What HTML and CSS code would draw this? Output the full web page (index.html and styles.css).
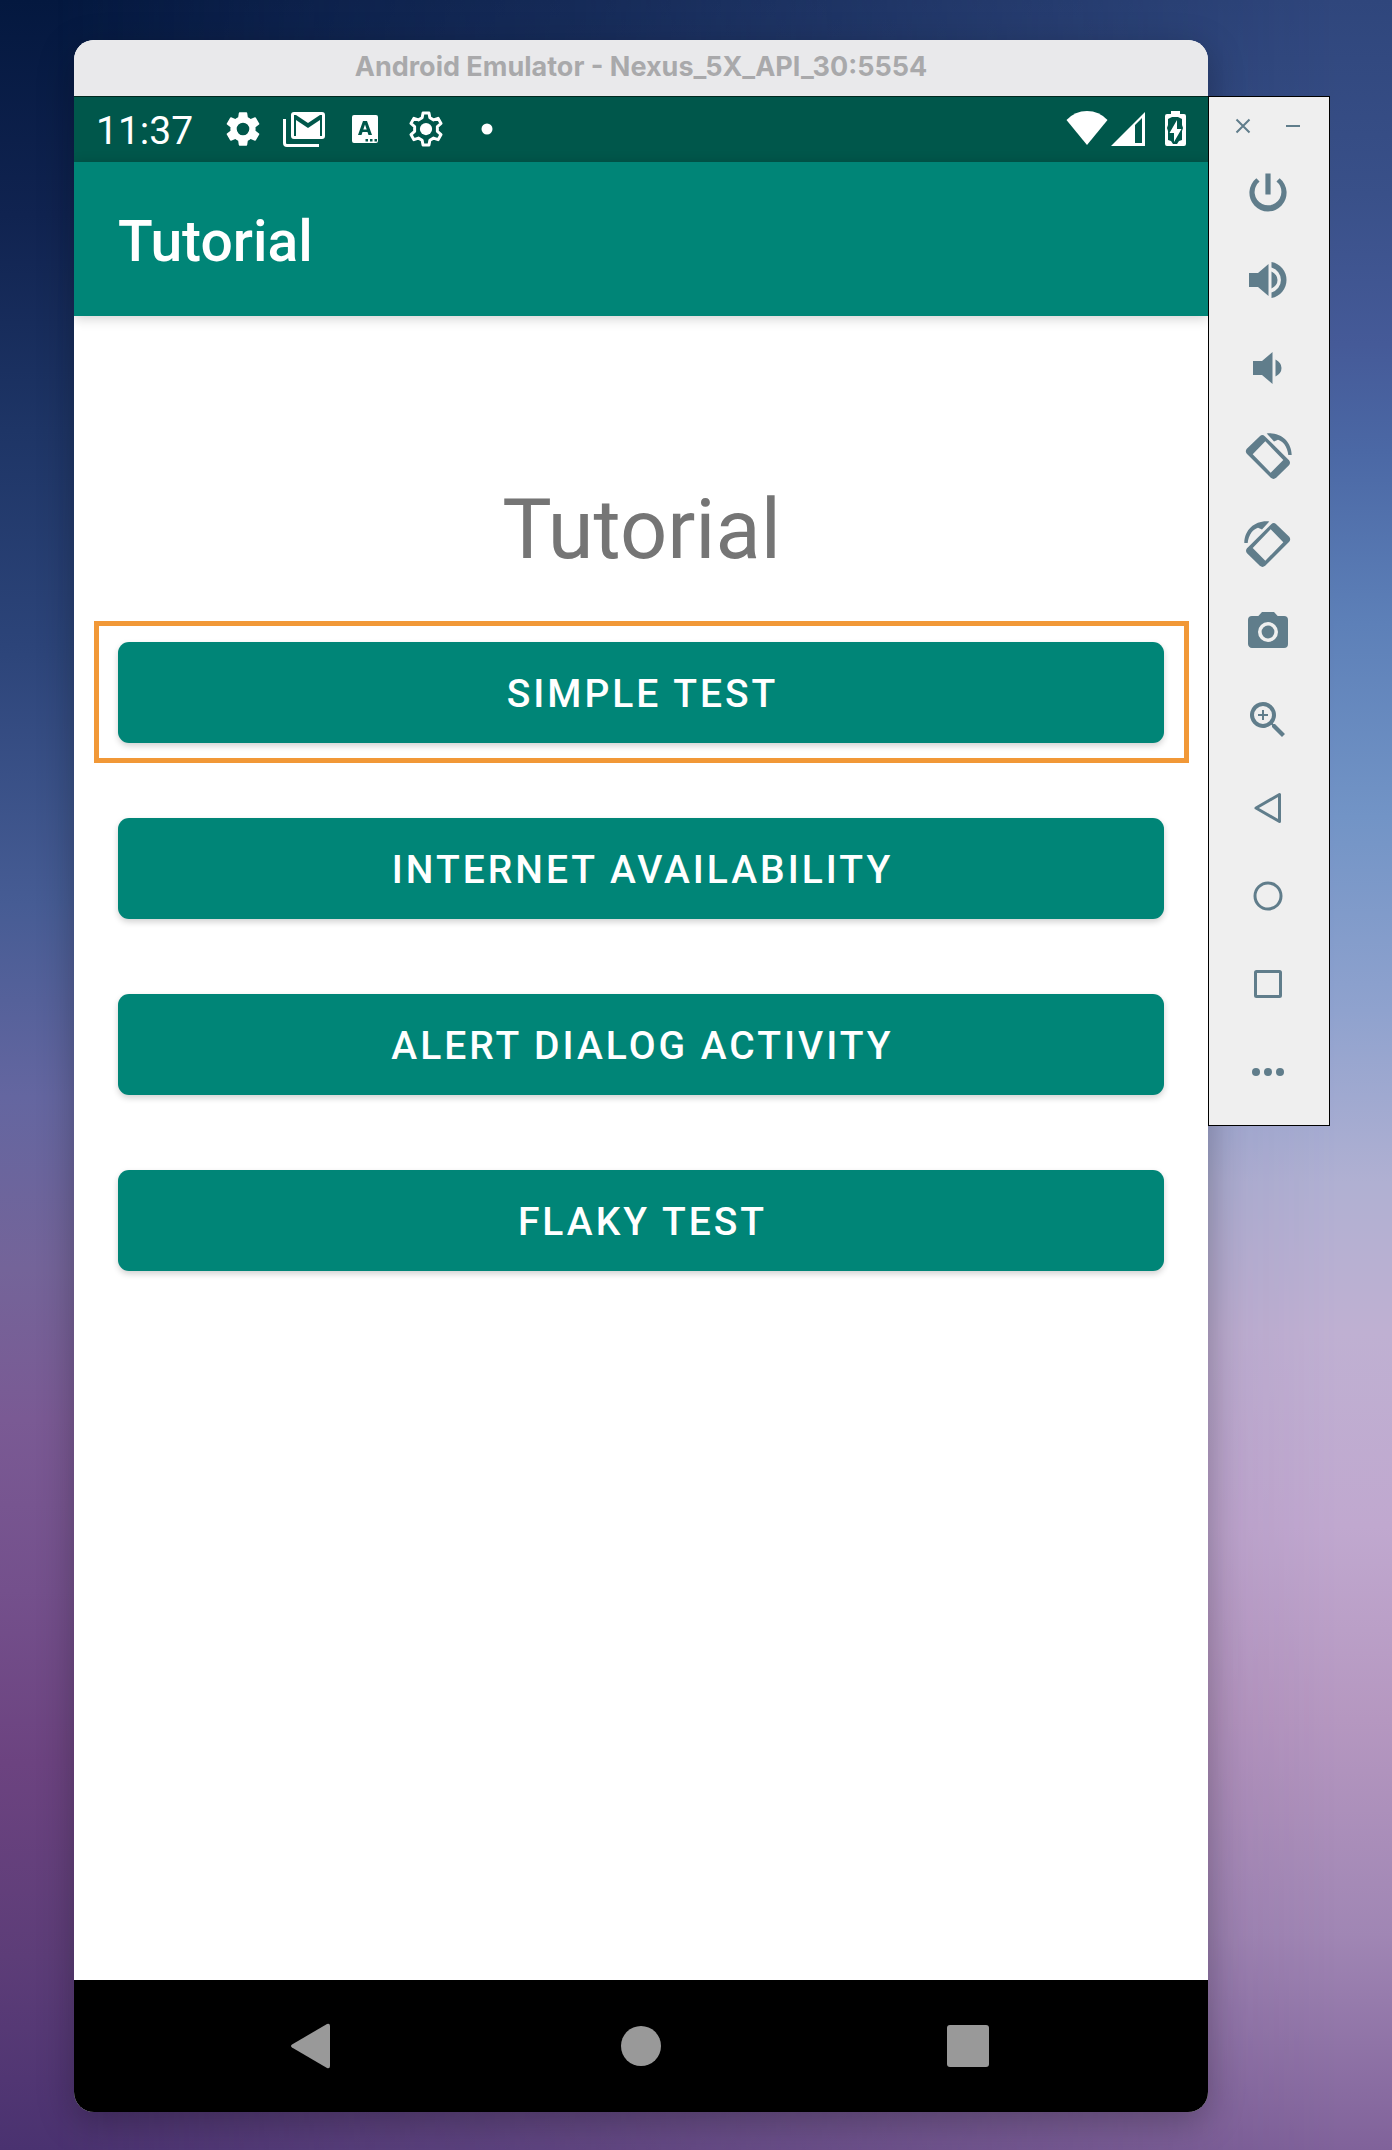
FILE: index.html
```html
<!DOCTYPE html>
<html lang="en">
<head>
<meta charset="utf-8">
<meta name="viewport" content="width=device-width, initial-scale=1">
<title>Android Emulator - Nexus_5X_API_30:5554</title>
<link rel="stylesheet" href="styles.css">
</head>
<body>
<div class="desktop">
  <div class="window">
    <header class="title-bar">Android Emulator - Nexus_5X_API_30:5554</header>
    <div class="status-bar">
      <span class="clock">11:37</span>
      <div class="notifications">
        <svg class="icon-status" viewBox="0 0 44 44" aria-hidden="true"><g transform="translate(1 0) scale(1.75)"><path d="M19.14 12.94c.04-.3.06-.61.06-.94 0-.32-.02-.64-.07-.94l2.03-1.58a.49.49 0 0 0 .12-.61l-1.92-3.32a.49.49 0 0 0-.59-.22l-2.39.96c-.5-.38-1.03-.7-1.62-.94l-.36-2.54a.48.48 0 0 0-.48-.41h-3.84c-.24 0-.43.17-.47.41l-.36 2.54c-.59.24-1.13.57-1.62.94l-2.39-.96a.48.48 0 0 0-.59.22L2.74 8.87c-.12.21-.08.47.12.61l2.03 1.58c-.05.3-.09.63-.09.94s.02.64.07.94l-2.03 1.58a.49.49 0 0 0-.12.61l1.92 3.32c.12.22.37.29.59.22l2.39-.96c.5.38 1.03.7 1.62.94l.36 2.54c.05.24.24.41.48.41h3.84c.24 0 .44-.17.47-.41l.36-2.54c.59-.24 1.13-.56 1.62-.94l2.39.96c.22.08.47 0 .59-.22l1.92-3.32a.49.49 0 0 0-.12-.61zM12 15.6a3.6 3.6 0 1 1 0-7.2 3.6 3.6 0 0 1 0 7.2z"/></g></svg>
        <svg class="icon-status" viewBox="0 0 44 44" aria-hidden="true"><path d="M2.500 11v24a2.500 2.500 0 0 0 2.500 2.500h32" fill="none" stroke="currentColor" stroke-width="3"/><path fill-rule="evenodd" d="M12 4h28a3 3 0 0 1 3 3v21a3 3 0 0 1-3 3H12a3 3 0 0 1-3-3V7a3 3 0 0 1 3-3zM12 28h2V12l12 8 12-8v16h2V7h-2L26 15 14 7h-2z"/></svg>
        <svg class="icon-status" viewBox="0 0 44 44" aria-hidden="true"><path fill-rule="evenodd" d="M11 7h22a2 2 0 0 1 2 2v24a2 2 0 0 1-2 2H11a2 2 0 0 1-2-2V9a2 2 0 0 1 2-2zM20 13l-5 14h3.500l1-3h5l1 3H29l-5-14zM22 16.500l1.700 5h-3.400zM22.500 31v2.500h2.500V31zM27 31v2.500h2.500V31zM31.500 31v2.500H34V31z"/></svg>
        <svg class="icon-status" viewBox="0 0 44 44" aria-hidden="true"><g transform="translate(1 0) scale(1.75)"><path fill="none" stroke="currentColor" stroke-width="1.700" stroke-linejoin="round" d="M10.300 2.900h3.400l.5 2.700 2.100 1.200 2.600-.9 1.700 2.900-2.100 1.800v2.800l2.100 1.800-1.700 2.900-2.600-.9-2.100 1.200-.5 2.700h-3.400l-.5-2.700-2.100-1.200-2.600.9-1.700-2.900 2.100-1.800v-2.800L3.400 8.800l1.700-2.900 2.600.9 2.100-1.200z"/><circle cx="12" cy="12" r="3.500"/></g></svg>
        <svg class="icon-status" viewBox="0 0 44 44" aria-hidden="true"><circle cx="22" cy="21" r="5.500"/></svg>
      </div>
      <div class="system">
        <svg class="icon-status" viewBox="0 0 44 44" aria-hidden="true"><path d="M22 37 1.500 12Q10 3 22 3t20.500 9z"/></svg>
        <svg class="icon-status" viewBox="0 0 44 44" aria-hidden="true"><path fill-rule="evenodd" d="M2 38 36 4v34zM26 17v18h7V10z"/></svg>
        <svg class="icon-status" viewBox="0 0 44 44" aria-hidden="true"><path fill-rule="evenodd" d="M18 3h9v3h4a2 2 0 0 1 2 2v28a2 2 0 0 1-2 2H14a2 2 0 0 1-2-2V8a2 2 0 0 1 2-2h4zM19 9l-4 2v6l-1 3 1 3v9l3 1 2 3h4l2-3 3-1v-9l1-3-1-3v-6l-4-2zM24 12v9h4.500L21 34v-9h-4.500z"/></svg>
      </div>
    </div>
    <div class="app-bar">Tutorial</div>
    <main class="screen">
      <h1 class="heading">Tutorial</h1>
      <div class="actions">
        <div class="highlight"><button class="action" type="button">SIMPLE TEST</button></div>
        <button class="action" type="button">INTERNET AVAILABILITY</button>
        <button class="action" type="button">ALERT DIALOG ACTIVITY</button>
        <button class="action" type="button">FLAKY TEST</button>
      </div>
    </main>
    <nav class="nav-bar">
      <button class="nav-key" type="button" aria-label="Back"><svg viewBox="0 0 48 48"><path d="M2 22.500 37 2q3-1 3 2v40q0 3-3 2L2 25.500q-2-1.500 0-3z"/></svg></button>
      <button class="nav-key" type="button" aria-label="Home"><svg viewBox="0 0 48 48"><circle cx="24" cy="24" r="20"/></svg></button>
      <button class="nav-key" type="button" aria-label="Overview"><svg viewBox="0 0 48 48"><rect x="3" y="3" width="42" height="42" rx="3"/></svg></button>
    </nav>
  </div>
  <aside class="toolbar">
    <div class="window-keys">
      <button class="window-key" type="button" aria-label="Close"><svg viewBox="0 0 24 24"><path class="line" d="m5.500 5.500 13 13m0-13-13 13"/></svg></button>
      <button class="window-key" type="button" aria-label="Minimize"><svg viewBox="0 0 24 24"><path class="line" d="M5 12h14"/></svg></button>
    </div>
    <button class="tool" type="button" aria-label="Power"><svg viewBox="0 0 24 24"><path d="M13.300 2.700h-2.600v10.600h2.600zm4.530 2.470-1.600 1.600A6.700 6.700 0 0 1 18.700 12a6.700 6.700 0 1 1-10.930-5.230l-1.600-1.600A9.300 9.300 0 1 0 17.830 5.170z"/></svg></button>
    <button class="tool" type="button" aria-label="Volume up"><svg viewBox="0 0 48 48"><path d="M5 17v14h9l10.500 9V8L14 17zM27.500 15.500v17q6-3 6-8.500t-6-8.500zM27.500 6v5.500a13 13 0 0 1 0 25V42a18.300 18.300 0 0 0 0-36z"/></svg></button>
    <button class="tool" type="button" aria-label="Volume down"><svg viewBox="0 0 48 48"><path d="M9 17v14h9l10.500 9V8L18 17zM31.500 15.500v17q6-3 6-8.500t-6-8.500z"/></svg></button>
    <button class="tool" type="button" aria-label="Rotate left"><svg viewBox="0 0 48 48"><path id="rotate" fill-rule="evenodd" d="M15.800 4.200q2.500-2.200 5 0L45 28.200q2 2.500 0 5L32.200 45.800q-2.700 2.200-5.400 0L2.800 21.800q-2-2.500 0-5zM21.300 9.300 8.700 22.300 26.700 40.700 39.300 28zM22.700 1.500C36 0 47.500 9 47.700 23h-3.400C43.500 14.500 38.500 9 34 7.800L30 9.500z"/></svg></button>
    <button class="tool" type="button" aria-label="Rotate right"><svg viewBox="0 0 48 48"><use href="#rotate" transform="matrix(-1 0 0 1 48 0)"/></svg></button>
    <button class="tool" type="button" aria-label="Take screenshot"><svg viewBox="0 0 24 24"><circle cx="12" cy="12" r="3.200"/><path d="M9 2 7.170 4H4a2 2 0 0 0-2 2v12c0 1.100.9 2 2 2h16a2 2 0 0 0 2-2V6a2 2 0 0 0-2-2h-3.170L15 2zm3 15a5 5 0 1 1 0-10 5 5 0 0 1 0 10z"/></svg></button>
    <button class="tool" type="button" aria-label="Zoom"><svg viewBox="0 0 24 24"><path d="M15.500 14h-.79l-.28-.27A6.500 6.500 0 1 0 13.730 14.430l.27.28v.79l5 4.990L20.490 19zm-6 0a4.500 4.500 0 1 1 0-9 4.500 4.500 0 0 1 0 9zM12 10h-2v2H9v-2H7V9h2V7h1v2h2z"/></svg></button>
    <button class="tool" type="button" aria-label="Back"><svg viewBox="0 0 48 48"><path class="line" d="M12 24 35.500 10.500v27z"/></svg></button>
    <button class="tool" type="button" aria-label="Home"><svg viewBox="0 0 48 48"><circle class="line" cx="24" cy="24" r="13"/></svg></button>
    <button class="tool" type="button" aria-label="Overview"><svg viewBox="0 0 48 48"><rect class="line" x="11.500" y="11.500" width="25" height="25" rx="1"/></svg></button>
    <button class="tool" type="button" aria-label="More"><svg viewBox="0 0 48 48"><circle cx="12" cy="24" r="4"/><circle cx="24" cy="24" r="4"/><circle cx="36" cy="24" r="4"/></svg></button>
  </aside>
</div>
</body>
</html>
```
FILE: styles.css
```css
* { box-sizing: border-box; }

body {
  margin: 0;
  font-family: Roboto, "Liberation Sans", sans-serif;
}

button {
  margin: 0;
  padding: 0;
  border: 0;
  background: none;
  color: inherit;
  font: inherit;
}

svg {
  display: block;
  width: 100%;
  height: 100%;
  fill: currentColor;
}

.desktop {
  display: flex;
  align-items: flex-start;
  min-height: 100vh;
  padding: 40px 62px 38px 74px;
  background: linear-gradient(#04183f 0%, #102350 10%, #1e3566 20%, #2c4479 30%, #465c94 42%, #6466a0 51%, #746499 59%, #7a5a94 66%, #74508c 74%, #6c4380 82%, #5d3d78 91%, #4a3270 100%);
  position: relative;
  isolation: isolate;
}

.desktop::before {
  content: "";
  position: absolute;
  inset: 0;
  z-index: -1;
  background: linear-gradient(#2f467c 0%, #395089 9%, #455a98 16%, #4b68a5 21%, #5d80b8 29%, #7294c6 38%, #8fa2ce 47%, #b0b0d2 55%, #bfb0d2 62%, #c0a8cf 71%, #b597c0 80%, #a086b4 90%, #80629a 100%);
  mask-image: linear-gradient(90deg, transparent 4%, #000 96%);
}

.window {
  display: flex;
  flex: 1;
  flex-direction: column;
  min-width: 0;
  min-height: calc(100vh - 78px);
  border-radius: 20px;
  overflow: hidden;
  background: #fff;
  box-shadow: 0 10px 36px rgb(0 0 0 / 28%);
}

.title-bar {
  height: 56px;
  background: #e9e9eb;
  color: #a9a9ab;
  font: 700 27px/54px Inter, "Liberation Sans", sans-serif;
  text-align: center;
}

.status-bar {
  display: flex;
  align-items: center;
  height: 66px;
  padding: 0 11px 0 22px;
  border-top: 1px solid #00291f;
  background: #00574b;
  color: #fff;
}

.clock {
  padding-top: 2px;
  font-size: 39px;
  line-height: 64px;
}

.notifications,
.system {
  display: flex;
}

.notifications {
  gap: 17px;
  margin-left: 28px;
}

.system {
  margin-left: auto;
}

.icon-status {
  width: 44px;
  height: 44px;
}

.app-bar {
  height: 154px;
  padding: 0 44px;
  background: #008577;
  box-shadow: 0 2px 12px rgb(0 0 0 / 20%);
  color: #fff;
  font-size: 57px;
  font-weight: 500;
  line-height: 160px;
}

.screen {
  flex: 1;
  padding: 164px 19px 40px 20px;
}

.heading {
  margin: 0;
  color: #757575;
  font-size: 83px;
  font-weight: 400;
  line-height: 100px;
  text-align: center;
}

.actions {
  display: flex;
  flex-direction: column;
  gap: 75px;
  padding: 41px 0 0;
}

.highlight {
  display: flex;
  margin-bottom: -20px;
  padding: 16px 20px 15px 19px;
  border: 5px solid #f19837;
}

.action {
  flex: 1 0 auto;
  height: 101px;
  margin: 0 25px 0 24px;
  padding: 3px 0 0 3px;
  border-radius: 11px;
  background: #008577;
  box-shadow: 0 3px 6px rgb(0 0 0 / 18%);
  color: #fff;
  font-size: 39px;
  font-weight: 500;
  letter-spacing: 3px;
  line-height: 98px;
}

.highlight .action { margin: 0; }

.nav-bar {
  display: flex;
  justify-content: center;
  gap: 279px;
  padding: 42px 0;
  background: #000;
  color: #999;
}

.nav-key {
  width: 48px;
  height: 48px;
}

.toolbar {
  display: flex;
  flex: none;
  flex-direction: column;
  align-items: center;
  gap: 40px;
  width: 122px;
  margin-top: 56px;
  padding: 17px 2px 29px 0;
  border: 1px solid #000;
  background: #efefef;
  color: #607d8b;
}

.window-keys {
  display: flex;
  gap: 26px;
  margin-bottom: -10px;
}

.window-key {
  width: 24px;
  height: 24px;
}

.window-key .line { stroke-width: 2; }

.tool {
  width: 48px;
  height: 48px;
}

.line {
  fill: none;
  stroke: currentColor;
  stroke-width: 3;
  stroke-linejoin: round;
}
```
